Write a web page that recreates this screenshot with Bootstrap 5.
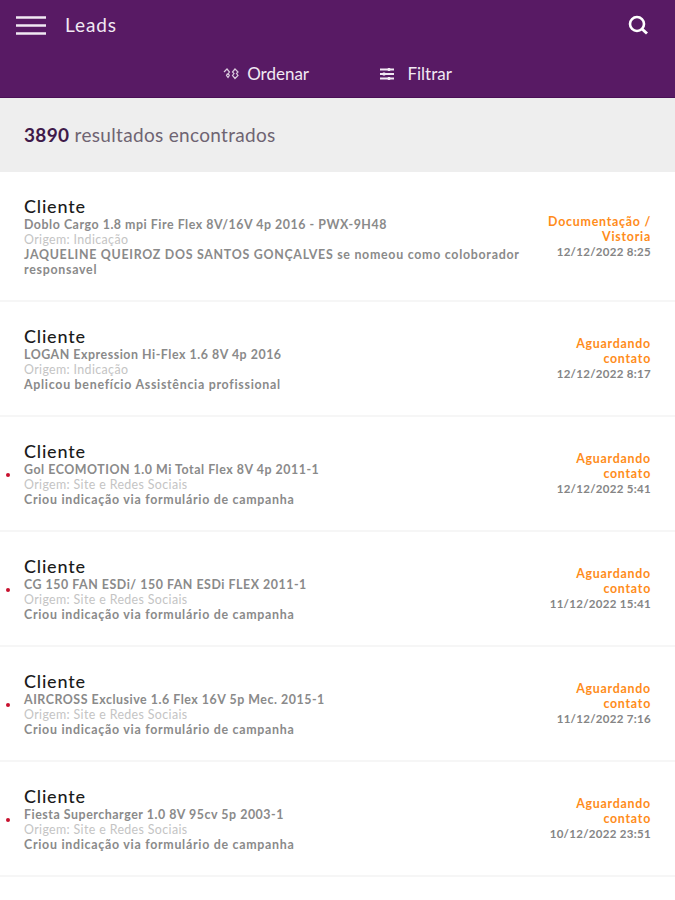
<!DOCTYPE html>
<html lang="en">
<head>
    <meta charset="UTF-8">
    <meta name="viewport" content="width=device-width, initial-scale=1.0">
    <title>Leads</title>
    <link href="https://cdn.jsdelivr.net/npm/bootstrap@5.3.0/dist/css/bootstrap.min.css" rel="stylesheet">
    <style>
        body {
            background-color: #fff;
            font-family: "Lato", "Noto Sans", sans-serif;
        }
        .top-bar {
            background-color: #581a64;
            color: #f1e9f3;
            height: 98px;
            border-bottom: 1px solid #4a1056;
        }
        .top-row {
            height: 50px;
            padding: 0 26px 0 16px;
        }
        .top-title {
            font-size: 19px;
            margin-left: 19px;
            letter-spacing: .9px;
        }
        .burger {
            width: 30px;
            height: 19px;
        }
        .sort-row {
            height: 47px;
            font-size: 17px;
            gap: 70px;
        }
        .count-bar {
            background-color: #eeeeee;
            height: 74px;
            padding-left: 24px;
            font-size: 19px;
            letter-spacing: .32px;
            color: #6e6472;
        }
        .count-bar strong {
            color: #3f1a4a;
        }
        .lead-row {
            position: relative;
            border-bottom: 2px solid #f6f6f6;
            padding: 23px 24px 23px 24px;
        }
        .lead-name {
            font-size: 18px;
            line-height: 22px;
            letter-spacing: .8px;
            font-weight: 500;
            color: #1b1b1b;
        }
        .lead-car, .lead-action {
            font-size: 12.400px;
            line-height: 15px;
            font-weight: 700;
            color: #8a8a8a;
        }
        .lead-car {
            letter-spacing: .53px;
        }
        .lead-action {
            letter-spacing: .72px;
        }
        .lead-origin {
            font-size: 12.400px;
            line-height: 15px;
            letter-spacing: .37px;
            color: #c4c4c4;
        }
        .lead-side {
            width: 106px;
            flex-shrink: 0;
            text-align: right;
        }
        .lead-status {
            font-size: 12.400px;
            line-height: 15px;
            font-weight: 700;
            letter-spacing: .75px;
            color: #ff8c1a;
        }
        .lead-date {
            font-size: 11.500px;
            line-height: 15px;
            font-weight: 700;
            letter-spacing: .3px;
            white-space: nowrap;
            color: #858585;
        }
        .new-dot {
            position: absolute;
            left: 6px;
            top: 56px;
            width: 4px;
            height: 4px;
            border-radius: 50%;
            background-color: #c8102e;
        }
    </style>
</head>
<body>
    <div class="top-bar">
        <div class="top-row d-flex align-items-center">
            <svg class="burger" viewBox="0 0 30 19"><path d="M0 1.500h30M0 9.500h30M0 17.500h30" stroke="#f1e9f3" stroke-width="2.400" fill="none"/></svg>
            <span class="top-title">Leads</span>
            <svg class="ms-auto" width="22" height="22" viewBox="0 0 22 22"><circle cx="10" cy="10" r="7" stroke="#fff" stroke-width="2.600" fill="none"/><path d="M15 15l5 4.500" stroke="#fff" stroke-width="3" fill="none"/></svg>
        </div>
        <div class="sort-row d-flex justify-content-center align-items-center">
            <span class="d-flex align-items-center gap-2">
                <svg width="16" height="14" viewBox="0 0 16 14"><path d="M1 5l3-3 2.500 3-1.200 1.500 1 2-1.300 2-1.500-2 1-2M9.500 5l2.500-3 3 3-1.500 1.500 1.500 2-3 3-2.500-3 1.500-2z" stroke="#d9c9dd" stroke-width="1.200" fill="none"/></svg>
                Ordenar
            </span>
            <span class="d-flex align-items-center gap-2">
                <svg width="16" height="14" viewBox="0 0 16 14"><path d="M1 2.500h14M1 7h14M1 11.500h14" stroke="#f1e9f3" stroke-width="1.800" fill="none"/><path d="M10 1v3M5 5.500v3M10 10v3" stroke="#f1e9f3" stroke-width="2.400" fill="none"/></svg>
                &nbsp;Filtrar
            </span>
        </div>
    </div>
    <div class="count-bar d-flex align-items-center"><span><strong>3890</strong> resultados encontrados</span></div>

    <div id="leadList"></div>

    <script>
        let leads = [
            { car: "Doblo Cargo 1.8 mpi Fire Flex 8V/16V 4p 2016 - PWX-9H48", origin: "Indicação", action: "JAQUELINE QUEIROZ DOS SANTOS GONÇALVES se nomeou como coloborador responsavel", status: "Documentação / Vistoria", date: "12/12/2022 8:25" },
            { car: "LOGAN Expression Hi-Flex 1.6 8V 4p 2016", origin: "Indicação", action: "Aplicou benefício Assistência profissional", status: "Aguardando contato", date: "12/12/2022 8:17" },
            { car: "Gol ECOMOTION 1.0 Mi Total Flex 8V 4p 2011-1", origin: "Site e Redes Sociais", action: "Criou indicação via formulário de campanha", status: "Aguardando contato", date: "12/12/2022 5:41", dot: true },
            { car: "CG 150 FAN ESDi/ 150 FAN ESDi FLEX 2011-1", origin: "Site e Redes Sociais", action: "Criou indicação via formulário de campanha", status: "Aguardando contato", date: "11/12/2022 15:41", dot: true },
            { car: "AIRCROSS Exclusive 1.6 Flex 16V 5p Mec. 2015-1", origin: "Site e Redes Sociais", action: "Criou indicação via formulário de campanha", status: "Aguardando contato", date: "11/12/2022 7:16", dot: true },
            { car: "Fiesta Supercharger 1.0 8V 95cv 5p 2003-1", origin: "Site e Redes Sociais", action: "Criou indicação via formulário de campanha", status: "Aguardando contato", date: "10/12/2022 23:51", dot: true }
        ];

        let html = "";
        leads.forEach(lead => {
            html += `<div class="lead-row d-flex">
                ${lead.dot ? '<span class="new-dot"></span>' : ""}
                <div class="flex-grow-1">
                    <div class="lead-name">Cliente</div>
                    <div class="lead-car">${lead.car}</div>
                    <div class="lead-origin">Origem: ${lead.origin}</div>
                    <div class="lead-action">${lead.action}</div>
                </div>
                <div class="lead-side align-self-center">
                    <div class="lead-status">${lead.status}</div>
                    <div class="lead-date">${lead.date}</div>
                </div>
            </div>`;
        });
        document.getElementById("leadList").innerHTML = html;
    </script>

    <script src="https://cdn.jsdelivr.net/npm/bootstrap@5.3.0/dist/js/bootstrap.bundle.min.js"></script>
</body>
</html>
